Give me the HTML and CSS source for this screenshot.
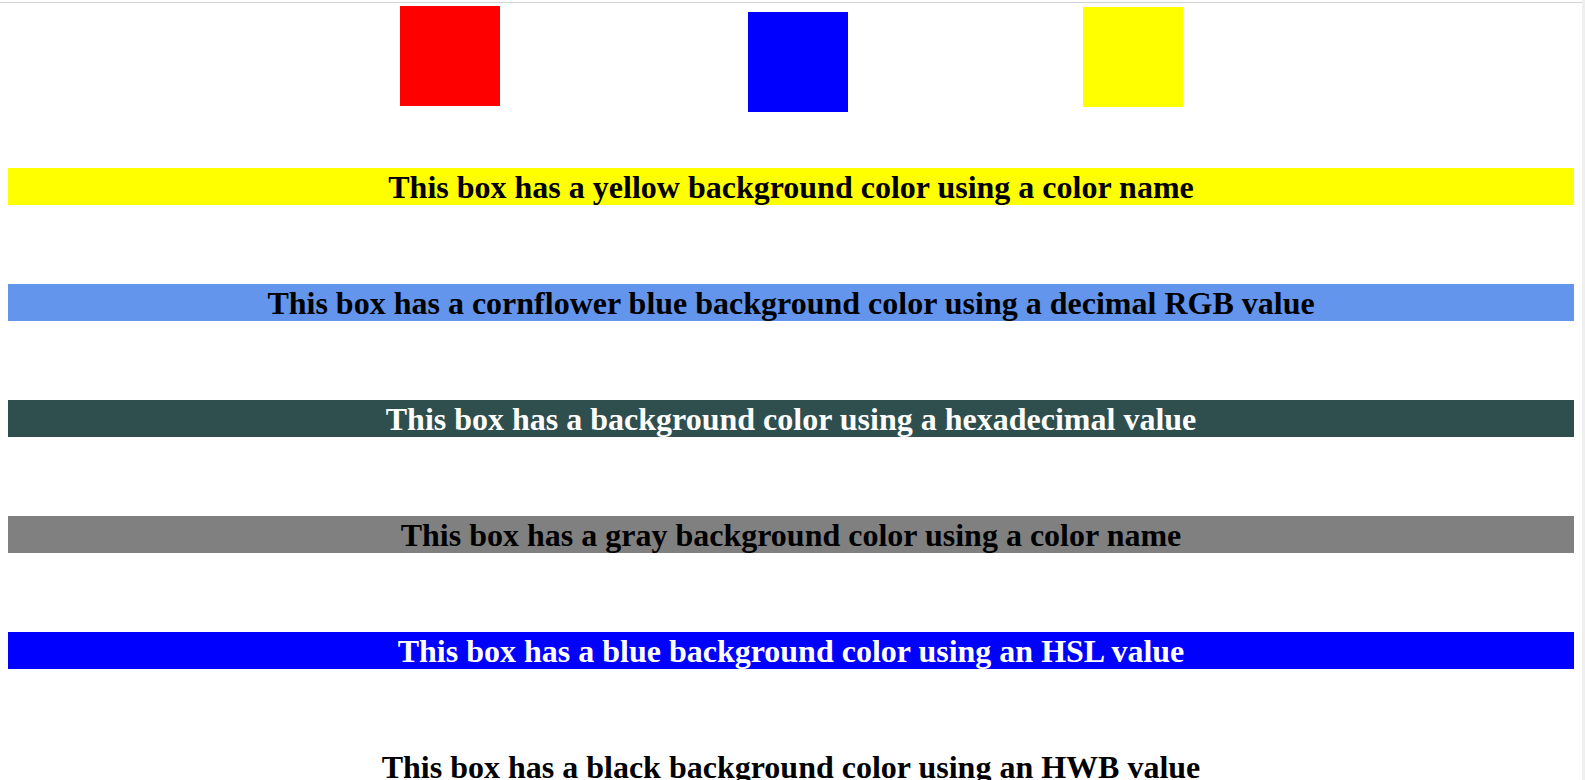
FILE: index.html
```html
<!DOCTYPE html>
<html lang="en">
<head>
<meta charset="utf-8">
<title>Background colors</title>
<link rel="stylesheet" href="styles.css">
</head>
<body>
<div class="page">
  <div class="topline"></div>
  <div class="squares">
    <div class="square square-red"></div>
    <div class="square square-blue"></div>
    <div class="square square-yellow"></div>
  </div>
  <div class="bars">
    <h1 class="bar bar-yellow">This box has a yellow background color using a color name</h1>
    <h1 class="bar bar-cornflower">This box has a cornflower blue background color using a decimal RGB value</h1>
    <h1 class="bar bar-hex">This box has a background color using a hexadecimal value</h1>
    <h1 class="bar bar-gray">This box has a gray background color using a color name</h1>
    <h1 class="bar bar-blue">This box has a blue background color using an HSL value</h1>
    <h1 class="bar bar-black">This box has a black background color using an HWB value</h1>
  </div>
</div>
</body>
</html>
```

FILE: styles.css
```css
html, body {
  margin: 0;
  padding: 0;
  overflow: hidden;
  background: #ffffff;
}

.page {
  height: 780px;
  padding-top: 2px;
  box-sizing: border-box;
  border-right: 3px solid #efefef;
  font-family: "Liberation Serif", "Times New Roman", serif;
}

.topline {
  height: 1px;
  background: #d4d4d4;
}

.squares {
  display: flex;
  align-items: flex-start;
  height: 109px;
}

.square {
  width: 100px;
  height: 100px;
  flex: none;
}

.square-red {
  background: #ff0000;
  margin: 3px 0 0 400px;
}

.square-blue {
  background: #0000ff;
  margin: 9px 0 0 248px;
}

.square-yellow {
  background: #ffff00;
  margin: 4px 0 0 235px;
}

.bars {
  display: flex;
  flex-direction: column;
  gap: 79px;
  margin: 56px 8px 0 8px;
}

.bar {
  margin: 0;
  height: 36px;
  padding-top: 1px;
  font-size: 32px;
  line-height: 37px;
  font-weight: bold;
  text-align: center;
  white-space: nowrap;
}

.bar-yellow { background: #ffff00; color: #000000; }
.bar-cornflower { background: #6495ed; color: #000000; }
.bar-hex { background: #2f4f4f; color: #ffffff; }
.bar-gray { background: #808080; color: #000000; }
.bar-blue { background: #0000ff; color: #ffffff; }
.bar-black { background: transparent; color: #000000; }
```
